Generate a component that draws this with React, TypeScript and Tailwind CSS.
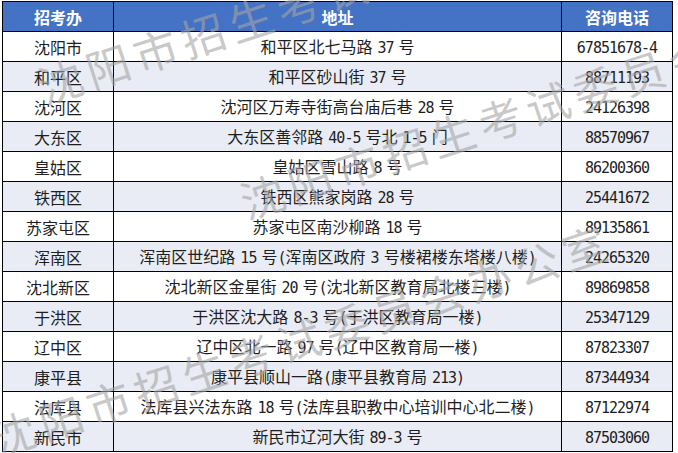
import React from "react"

const rows: [string, string, string][] = [
  ["沈阳市", "和平区北七马路 37 号", "67851678-4"],
  ["和平区", "和平区砂山街 37 号", "88711193"],
  ["沈河区", "沈河区万寿寺街高台庙后巷 28 号", "24126398"],
  ["大东区", "大东区善邻路 40-5 号北 1-5 门", "88570967"],
  ["皇姑区", "皇姑区雪山路 8 号", "86200360"],
  ["铁西区", "铁西区熊家岗路 28 号", "25441672"],
  ["苏家屯区", "苏家屯区南沙柳路 18 号", "89135861"],
  ["浑南区", "浑南区世纪路 15 号(浑南区政府 3 号楼裙楼东塔楼八楼)", "24265320"],
  ["沈北新区", "沈北新区金星街 20 号(沈北新区教育局北楼三楼)", "89869858"],
  ["于洪区", "于洪区沈大路 8-3 号(于洪区教育局一楼)", "25347129"],
  ["辽中区", "辽中区北一路 97 号(辽中区教育局一楼)", "87823307"],
  ["康平县", "康平县顺山一路(康平县教育局 213)", "87344934"],
  ["法库县", "法库县兴法东路 18 号(法库县职教中心培训中心北二楼)", "87122974"],
  ["新民市", "新民市辽河大街 89-3 号", "87503060"],
]

// ascii runs get the narrow mono face, like the half-width digits in the picture
const Mixed = ({ text }: { text: string }) => (
  <>
    {text.split(/([\x20-\x7e]+)/).map((part, i) =>
      /[\x20-\x7e]/.test(part) ? (
        <span
          key={i}
          className="font-['DejaVu_Sans_Mono',monospace] text-[15px] tracking-[-1px] [word-spacing:-3px]"
        >
          {part}
        </span>
      ) : (
        <span key={i}>{part}</span>
      )
    )}
  </>
)

const mark = "沈阳市招生考试委员会办公室"

export default function App() {
  return (
    <div className="relative h-[453px] w-[678px] overflow-hidden bg-white font-['Noto_Sans_CJK_SC',sans-serif]">
      <div className="pl-[2px] pt-[1px]">
        <table className="w-[671px] table-fixed border-collapse text-center text-[16px] text-[#1e1e1e]">
          <colgroup>
            <col className="w-[111px]" />
            <col className="w-[448px]" />
            <col className="w-[111px]" />
          </colgroup>
          <thead>
            <tr className="h-[30px] bg-[#4472c4] font-bold text-white">
              <th className="border border-black p-0">招考办</th>
              <th className="border border-black p-0">地址</th>
              <th className="border border-black p-0">咨询电话</th>
            </tr>
          </thead>
          <tbody>
            {rows.map(([office, address, phone], i) => (
              <tr key={office} className={`h-[30px] ${i % 2 === 1 ? "bg-[#e9ecf4]" : "bg-white"}`}>
                <td className="whitespace-nowrap border border-black p-0 leading-none">{office}</td>
                <td className="whitespace-nowrap border border-black p-0 leading-none">
                  <Mixed text={address} />
                </td>
                <td className="whitespace-nowrap border border-black p-0 leading-none">
                  <Mixed text={phone} />
                </td>
              </tr>
            ))}
          </tbody>
        </table>
      </div>

      {/* watermark */}
      <span className="pointer-events-none absolute left-[38px] top-[58px] origin-[22px_22px] rotate-[-18deg] whitespace-nowrap text-[44px] leading-none tracking-[6px] text-[rgba(165,165,165,0.6)]">
        {mark}
      </span>
      <span className="pointer-events-none absolute left-[240px] top-[173px] origin-[22px_22px] rotate-[-18deg] whitespace-nowrap text-[44px] leading-none tracking-[6px] text-[rgba(165,165,165,0.6)]">
        {mark}
      </span>
      <span className="pointer-events-none absolute left-[-9px] top-[410px] origin-[22px_22px] rotate-[-18deg] whitespace-nowrap text-[44px] leading-none tracking-[6px] text-[rgba(165,165,165,0.6)]">
        {mark}
      </span>
    </div>
  )
}
